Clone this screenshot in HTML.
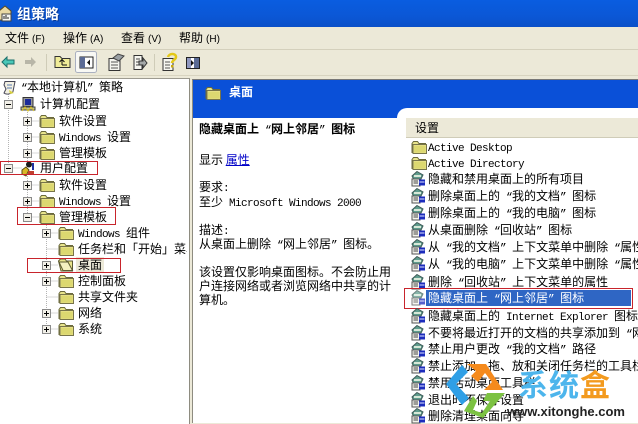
<!DOCTYPE html>
<html><head><meta charset="utf-8"><style>
html,body{margin:0;padding:0}
body{width:638px;height:423px;overflow:hidden;position:relative;background:#ece9d8;font:12px/16px "WenQuanYi Zen Hei","Noto Sans CJK SC",sans-serif;color:#000}
.a{position:absolute;white-space:nowrap}
.t{position:absolute;white-space:pre;height:16px;line-height:16px}
i{font:11px/16px "Liberation Mono",monospace;font-style:normal;letter-spacing:-.6px}
b{font:10px/16px "Liberation Sans",sans-serif;margin-left:3px}
svg.ic{position:absolute;overflow:visible}
.r{position:absolute;border:1px solid #c8242c;box-sizing:border-box}
</style></head><body>
<svg width="0" height="0" style="position:absolute"><defs>
<symbol id="f" viewBox="0 0 16 14"><path d="M1 3.500L2.500 1.500H6.500L8 3.500H14.500V12.500H1Z" fill="#e8e48c" stroke="#6b6a3c"/><path d="M2 12.500V4.500H15.500V13.500H2Z" fill="#e6e084" stroke="#77744a"/><path d="M3 6H14.500V12.500H3Z" fill="#dcd870"/></symbol>
<symbol id="o" viewBox="0 0 16 14"><path d="M0.500 3L2.500 1H7L8.500 3H14.500V13H3Z" fill="#e8e48c" stroke="#5c5a32"/><path d="M1 4H10L14.500 12.500H5Z" fill="#f4f0c0" stroke="#5c5a32"/></symbol>
<symbol id="p" viewBox="0 0 9 9"><rect x=".5" y=".5" width="8" height="8" fill="#f2f0e8" stroke="#8a8a8a"/><path d="M2 4.500H7M4.500 2V7" stroke="#000"/></symbol>
<symbol id="m" viewBox="0 0 9 9"><rect x=".5" y=".5" width="8" height="8" fill="#f2f0e8" stroke="#8a8a8a"/><path d="M2 4.500H7" stroke="#000"/></symbol>
<symbol id="s" viewBox="0 0 16 16"><path d="M7 0.500L13 4 11 8H3.500L2 5Z" fill="#5f9d8e" stroke="#405c58"/><path d="M4 4H11V6H4Z" fill="#d8e8d8"/><path d="M2 8H10V15H2Z" fill="#f4f4ec" stroke="#555"/><path d="M3.500 10H8M3.500 12H8" stroke="#444"/><path d="M9 8.500H15V14.500H9Z" fill="#1c2cbc"/><path d="M9.500 11H14.500" stroke="#dfe3ff"/></symbol>
</defs></svg>

<!-- title bar -->
<div class="a" style="left:0;top:0;width:638px;height:27px;background:linear-gradient(#0a5de0,#0b57d6 60%,#0a50c8)"></div>
<svg class="ic" style="left:0;top:4px" width="14" height="18" viewBox="0 0 14 18"><path d="M-1 7L5 2 11 7V16H-1Z" fill="#e9d9a4" stroke="#5b4a20"/><path d="M2 10H11V17H2Z" fill="#f4f4f0" stroke="#444"/><path d="M4 15V12M6 15V11M8 15V13" stroke="#222"/></svg>
<div class="a" style="left:17px;top:5px;color:#fff;font-weight:bold;font-size:14px;line-height:18px;text-shadow:1px 1px 0 #083a98">组策略</div>

<!-- menu -->
<div class="a" style="left:0;top:27px;width:638px;height:23px;background:#ece9d8;border-bottom:1px solid #d4d0bc;box-sizing:border-box"></div>
<div class="t" style="left:5px;top:30px">文件<b>(F)</b></div>
<div class="t" style="left:63px;top:30px">操作<b>(A)</b></div>
<div class="t" style="left:121px;top:30px">查看<b>(V)</b></div>
<div class="t" style="left:179px;top:30px">帮助<b>(H)</b></div>

<!-- toolbar -->
<svg class="ic" style="left:0;top:50px" width="230" height="26" viewBox="0 0 230 26">
<path d="M2 12L7 7V10H14V14H7V17Z" fill="#49c8b8" stroke="#1d6f6a"/>
<path d="M36 12L31 7V10H25V14H31V17Z" fill="#b8b6a8"/>
<path d="M46.500 4V21M154.500 4V21" stroke="#cfccb8"/>
<path d="M55 6.500H60L62 8.500H70V17.500H55Z" fill="#f0ec98" stroke="#333"/><path d="M62 15V10M59.500 12L62 9.500 64.500 12M62 15H67" stroke="#111" fill="none"/>
<rect x="75.500" y="1.500" width="21" height="21" rx="2" fill="#f8f8f4" stroke="#aab0c0"/>
<rect x="80" y="7" width="13" height="11" fill="#fff" stroke="#222"/><rect x="80" y="7" width="5" height="11" fill="#5a6a94"/><path d="M90 9.500V15.500L87 12.500Z" fill="#111"/>
<path d="M109 8.500H120V20.500H109Z" fill="#f6f6f0" stroke="#333"/><path d="M111 12H118M111 15H118M111 18H118" stroke="#555"/><path d="M113 8L118 4 124 6 119 11Z" fill="#9aa0a4" stroke="#444"/>
<path d="M134 5.500H142V19.500H134Z" fill="#f6f6f0" stroke="#333"/><path d="M136 9H140M136 12H140M136 15H140" stroke="#444"/><path d="M139 11H143V8L147 13 143 18V15H139Z" fill="#a4a8a8" stroke="#333"/>
<path d="M163 8.500H173V20.500H163Z" fill="#f6f6f0" stroke="#333"/><path d="M165 12H170M165 15H170M165 18H170" stroke="#555"/><path d="M168 7C169 3 176 3 176 7 176 10 172 10 172 13" fill="none" stroke="#e4c818" stroke-width="2.500"/><rect x="171" y="15" width="2.500" height="2.500" fill="#c8a810"/>
<rect x="186.500" y="7.500" width="13" height="11" fill="#fff" stroke="#222"/><rect x="194" y="8" width="5" height="10" fill="#5a6a94"/><rect x="187" y="8" width="4" height="10" fill="#9098c0"/><path d="M191 10V16L194 13Z" fill="#111"/>
</svg>
<div class="a" style="left:0;top:75px;width:638px;height:1px;background:#d8d4c0"></div>

<!-- tree pane -->
<div class="a" style="left:0;top:78px;width:189px;height:345px;background:#fff;border-right:1px solid #8e8c80;border-top:1px solid #9c9a90"></div>
<svg class="ic" style="left:0;top:0" width="190" height="423"><g stroke="#b4b4b4" stroke-dasharray="1 1" fill="none">
<path d="M8.500 92V168M27.500 112V217M46.500 225V329M8.500 168H22M27.500 121H40M27.500 137H40M27.500 153H40M27.500 185H40M27.500 201H40M27.500 217H40M46.500 233H58M46.500 249H58M46.500 265H58M46.500 281H58M46.500 297H58M46.500 313H58M46.500 329H58"/></g></svg>

<svg class="ic" style="left:2px;top:80px" width="15" height="16" viewBox="0 0 15 16"><path d="M3 1.500H13L11 11.500C10 14 4 15 2 13L4 9 2 5Z" fill="#f2f0e2" stroke="#445"/><path d="M5 5H10M5 8H10" stroke="#5a7ab0"/><path d="M7 10L12 13 8 14Z" fill="#d8d040"/></svg>
<div class="t" style="left:21px;top:79px"><i>“</i>本地计算机<i>” </i>策略</div>

<svg class="ic" style="left:4px;top:100px" width="9" height="9"><use href="#m"/></svg>
<svg class="ic" style="left:20px;top:96px" width="16" height="16" viewBox="0 0 16 16"><rect x="3" y="1.500" width="10" height="9" fill="#9a9a9a" stroke="#333"/><rect x="5" y="3" width="6" height="6" fill="#1b2a9a"/><path d="M1 11H15V14H1Z" fill="#c0c090" stroke="#444"/><path d="M2 15L5 11 8 15 11 11 14 15" stroke="#d8c020" fill="none"/></svg>
<div class="t" style="left:40px;top:96px">计算机配置</div>

<svg class="ic" style="left:23px;top:117px" width="9" height="9"><use href="#p"/></svg><svg class="ic" style="left:39px;top:114px" width="16" height="14"><use href="#f"/></svg><div class="t" style="left:59px;top:113px">软件设置</div>
<svg class="ic" style="left:23px;top:133px" width="9" height="9"><use href="#p"/></svg><svg class="ic" style="left:39px;top:130px" width="16" height="14"><use href="#f"/></svg><div class="t" style="left:59px;top:129px"><i>Windows </i>设置</div>
<svg class="ic" style="left:23px;top:149px" width="9" height="9"><use href="#p"/></svg><svg class="ic" style="left:39px;top:146px" width="16" height="14"><use href="#f"/></svg><div class="t" style="left:59px;top:145px">管理模板</div>

<svg class="ic" style="left:4px;top:164px" width="9" height="9"><use href="#m"/></svg>
<svg class="ic" style="left:20px;top:161px" width="16" height="16" viewBox="0 0 16 16"><circle cx="9" cy="3.500" r="3" fill="#1a1a1a"/><path d="M13 2V9" stroke="#2030a0" stroke-width="2"/><path d="M2 9L6 6 9 9 6 15 2 13Z" fill="#d8b828" stroke="#5a4a10"/><path d="M8 10H14V14H8Z" fill="#c04030"/></svg>
<div class="t" style="left:40px;top:160px">用户配置</div>

<svg class="ic" style="left:23px;top:181px" width="9" height="9"><use href="#p"/></svg><svg class="ic" style="left:39px;top:178px" width="16" height="14"><use href="#f"/></svg><div class="t" style="left:59px;top:177px">软件设置</div>
<svg class="ic" style="left:23px;top:197px" width="9" height="9"><use href="#p"/></svg><svg class="ic" style="left:39px;top:194px" width="16" height="14"><use href="#f"/></svg><div class="t" style="left:59px;top:193px"><i>Windows </i>设置</div>
<svg class="ic" style="left:23px;top:213px" width="9" height="9"><use href="#m"/></svg><svg class="ic" style="left:39px;top:210px" width="16" height="14"><use href="#f"/></svg><div class="t" style="left:59px;top:209px">管理模板</div>

<svg class="ic" style="left:42px;top:229px" width="9" height="9"><use href="#p"/></svg><svg class="ic" style="left:58px;top:226px" width="16" height="14"><use href="#f"/></svg><div class="t" style="left:78px;top:225px"><i>Windows </i>组件</div>
<svg class="ic" style="left:58px;top:242px" width="16" height="14"><use href="#f"/></svg><div class="t" style="left:78px;top:241px;width:109px;overflow:hidden">任务栏和「开始」菜单</div>
<svg class="ic" style="left:42px;top:261px" width="9" height="9"><use href="#p"/></svg><svg class="ic" style="left:58px;top:258px" width="16" height="14"><use href="#o"/></svg><div class="a" style="left:76px;top:257px;width:28px;height:16px;background:#ece9d8"></div><div class="t" style="left:78px;top:257px">桌面</div>
<svg class="ic" style="left:42px;top:277px" width="9" height="9"><use href="#p"/></svg><svg class="ic" style="left:58px;top:274px" width="16" height="14"><use href="#f"/></svg><div class="t" style="left:78px;top:273px">控制面板</div>
<svg class="ic" style="left:58px;top:290px" width="16" height="14"><use href="#f"/></svg><div class="t" style="left:78px;top:289px">共享文件夹</div>
<svg class="ic" style="left:42px;top:309px" width="9" height="9"><use href="#p"/></svg><svg class="ic" style="left:58px;top:306px" width="16" height="14"><use href="#f"/></svg><div class="t" style="left:78px;top:305px">网络</div>
<svg class="ic" style="left:42px;top:325px" width="9" height="9"><use href="#p"/></svg><svg class="ic" style="left:58px;top:322px" width="16" height="14"><use href="#f"/></svg><div class="t" style="left:78px;top:321px">系统</div>

<div class="r" style="left:0;top:161px;width:98px;height:14px"></div>
<div class="r" style="left:17px;top:207px;width:99px;height:18px"></div>
<div class="r" style="left:27px;top:258px;width:94px;height:15px"></div>

<!-- right pane -->
<div class="a" style="left:192px;top:79px;width:446px;height:344px;background:#fff;border-left:1px solid #8e8c80;border-top:1px solid #777;box-sizing:border-box"></div>
<div class="a" style="left:193px;top:80px;width:445px;height:38px;background:#0a50d8"></div>
<div class="a" style="left:397px;top:108px;width:241px;height:20px;background:#fff;border-radius:10px 0 0 0"></div>
<svg class="ic" style="left:205px;top:86px" width="16" height="14"><use href="#f"/></svg>
<div class="a" style="left:229px;top:83px;color:#fff;font-weight:bold;line-height:18px">桌面</div>

<div class="t" style="left:199px;top:121px;font-weight:bold">隐藏桌面上<i> “</i>网上邻居<i>” </i>图标</div>
<div class="t" style="left:199px;top:152px">显示 <span style="color:#0000c8;text-decoration:underline">属性</span></div>
<div class="t" style="left:199px;top:179px">要求<i>:</i></div>
<div class="t" style="left:199px;top:194px">至少<i> Microsoft Windows 2000</i></div>
<div class="t" style="left:199px;top:222px">描述<i>:</i></div>
<div class="t" style="left:199px;top:236px">从桌面上删除<i> “</i>网上邻居<i>” </i>图标。</div>
<div class="t" style="left:199px;top:264px">该设置仅影响桌面图标。不会防止用</div>
<div class="t" style="left:199px;top:278px">户连接网络或者浏览网络中共享的计</div>
<div class="t" style="left:199px;top:292px">算机。</div>

<!-- list -->
<div class="a" style="left:406px;top:118px;width:232px;height:20px;background:#ece9d8;border-bottom:1px solid #cfccb8;box-sizing:border-box"></div>
<div class="t" style="left:415px;top:120px">设置</div>
<svg class="ic" style="left:411px;top:140px" width="16" height="14"><use href="#f"/></svg><div class="t" style="left:428px;top:139px"><i>Active Desktop</i></div>
<svg class="ic" style="left:411px;top:156px" width="16" height="14"><use href="#f"/></svg><div class="t" style="left:428px;top:155px"><i>Active Directory</i></div>
<svg class="ic" style="left:410px;top:171px" width="16" height="16"><use href="#s"/></svg><div class="t" style="left:428px;top:171px">隐藏和禁用桌面上的所有项目</div>
<svg class="ic" style="left:410px;top:188px" width="16" height="16"><use href="#s"/></svg><div class="t" style="left:428px;top:188px">删除桌面上的<i> “</i>我的文档<i>” </i>图标</div>
<svg class="ic" style="left:410px;top:205px" width="16" height="16"><use href="#s"/></svg><div class="t" style="left:428px;top:205px">删除桌面上的<i> “</i>我的电脑<i>” </i>图标</div>
<svg class="ic" style="left:410px;top:222px" width="16" height="16"><use href="#s"/></svg><div class="t" style="left:428px;top:222px">从桌面删除<i> “</i>回收站<i>” </i>图标</div>
<svg class="ic" style="left:410px;top:239px" width="16" height="16"><use href="#s"/></svg><div class="t" style="left:428px;top:239px">从<i> “</i>我的文档<i>” </i>上下文菜单中删除<i> “</i>属性<i>”</i></div>
<svg class="ic" style="left:410px;top:256px" width="16" height="16"><use href="#s"/></svg><div class="t" style="left:428px;top:256px">从<i> “</i>我的电脑<i>” </i>上下文菜单中删除<i> “</i>属性<i>”</i></div>
<svg class="ic" style="left:410px;top:274px" width="16" height="16"><use href="#s"/></svg><div class="t" style="left:428px;top:274px">删除<i> “</i>回收站<i>” </i>上下文菜单的属性</div>
<div class="a" style="left:426px;top:290px;width:205px;height:16px;background:#2f66c4"></div>
<svg class="ic" style="left:410px;top:290px;opacity:.75" width="16" height="16"><use href="#s"/></svg>
<div class="t" style="left:428px;top:290px;color:#fff">隐藏桌面上<i> “</i>网上邻居<i>” </i>图标</div>
<div class="r" style="left:404px;top:288px;width:229px;height:21px"></div>
<svg class="ic" style="left:410px;top:308px" width="16" height="16"><use href="#s"/></svg><div class="t" style="left:428px;top:308px">隐藏桌面上的<i> Internet Explorer </i>图标</div>
<svg class="ic" style="left:410px;top:325px" width="16" height="16"><use href="#s"/></svg><div class="t" style="left:428px;top:325px">不要将最近打开的文档的共享添加到<i> “</i>网</div>
<svg class="ic" style="left:410px;top:342px" width="16" height="16"><use href="#s"/></svg><div class="t" style="left:428px;top:341px">禁止用户更改<i> “</i>我的文档<i>” </i>路径</div>
<svg class="ic" style="left:410px;top:358px" width="16" height="16"><use href="#s"/></svg><div class="t" style="left:428px;top:358px">禁止添加、拖、放和关闭任务栏的工具栏</div>
<svg class="ic" style="left:410px;top:375px" width="16" height="16"><use href="#s"/></svg><div class="t" style="left:428px;top:375px">禁用活动桌面工具栏</div>
<svg class="ic" style="left:410px;top:392px" width="16" height="16"><use href="#s"/></svg><div class="t" style="left:428px;top:392px">退出时不保存设置</div>
<svg class="ic" style="left:410px;top:408px" width="16" height="16"><use href="#s"/></svg><div class="t" style="left:428px;top:408px">删除清理桌面向导</div>

<!-- watermark -->
<svg class="ic" style="left:0;top:0" width="638" height="423" viewBox="0 0 638 423">
<path d="M462 365L468 372 456 384 469 398 462 405 446 384Z" fill="#2f9fe6"/>
<path d="M467 364H486L503 390H484L492 382 485 373 478 382 471 376 476 371Z" fill="#f58a1c"/>
<path d="M505 393L483 418 464 411 473 396 477 401 473 410 482 413 490 401 483 401 487 393Z" fill="#7cc242"/>
</svg>
<div class="a" style="left:518px;top:366px;font:bold 30px/34px 'Noto Sans CJK SC',sans-serif;color:#4db5ec;letter-spacing:1px">系统<span style="color:#f39a1e">盒</span></div>
<div class="a" style="left:507px;top:405px;font:bold 13px/14px 'Liberation Sans',sans-serif;color:#222">www.xitonghe.com</div>
</body></html>
